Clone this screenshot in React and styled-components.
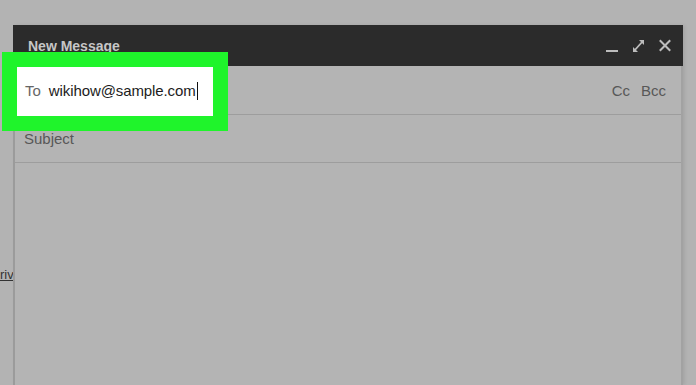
import React from "react";
import styled, { createGlobalStyle } from "styled-components";

const Global = createGlobalStyle`
  html, body { margin: 0; padding: 0; background: #b3b3b3; }
  body { font-family: "Liberation Sans", Arial, Helvetica, sans-serif; overflow: hidden; }
`;

const Page = styled.div`
  position: relative;
  display: flex;
  width: 696px;
  height: 385px;
  padding-top: 25px;
  box-sizing: border-box;
  background: #b3b3b3;
  overflow: hidden;
`;

const Side = styled.div`
  width: 13px;
  flex: none;
  padding-top: 242px;
  overflow: hidden;
`;

const SideLink = styled.span`
  display: block;
  font-size: 13px;
  color: #333;
  text-decoration: underline;
  white-space: nowrap;
`;

const Window = styled.div`
  width: 670px;
  flex: none;
  display: flex;
  flex-direction: column;
  background: #b4b4b4;
  border-left: 2px solid #9b9b9b;
  border-right: 2px solid #a2a2a2;
  box-sizing: border-box;
  box-shadow: 2px 0 3px rgba(0, 0, 0, 0.08);
`;

const Header = styled.div`
  height: 41px;
  background: #2b2b2b;
  display: flex;
  align-items: center;
  margin: 0 -2px;
  padding: 0 12px 0 15px;
`;

const Title = styled.div`
  flex: 1;
  font-size: 14px;
  font-weight: bold;
  color: #c6c6c6;
  padding-top: 1px;
`;

const Icons = styled.div`
  display: flex;
  align-items: center;
  gap: 14px;
`;

const Icon = styled.svg`
  display: block;
  width: ${(p) => p.$w}px;
  height: 14px;
`;

const Row = styled.div`
  height: ${(p) => p.$h}px;
  border-bottom: 1px solid #9d9d9d;
  display: flex;
  align-items: center;
  padding: 0 15px 0 9px;
  font-size: 15px;
  color: #585858;
`;

const Spacer = styled.div`
  flex: 1;
`;

const Links = styled.div`
  display: flex;
  gap: 11px;
  padding-top: 1px;
`;

const Highlight = styled.div`
  position: absolute;
  left: 2px;
  top: 52px;
  width: 226px;
  height: 79px;
  box-sizing: border-box;
  border: 15px solid #1ff42b;
  background: #ffffff;
  display: flex;
  align-items: center;
  padding: 0 0 2px 8px;
  font-size: 15px;
`;

const Label = styled.span`
  color: #666;
  margin-right: 8px;
`;

const Value = styled.span`
  color: #1c1c1c;
  letter-spacing: -0.1px;
`;

const Caret = styled.span`
  display: inline-block;
  width: 1px;
  height: 18px;
  background: #111;
  margin-left: 1px;
`;

export default function App() {
  return (
    <>
      <Global />
      <Page>
        <Side>
          <SideLink>riv</SideLink>
        </Side>
        <Window>
          <Header>
            <Title>New Message</Title>
            <Icons>
              <Icon $w={12} viewBox="0 0 12 14">
                <rect x="0" y="11" width="12" height="2" fill="#bcbcbc" />
              </Icon>
              <Icon $w={13} viewBox="0 0 13 14">
                <g stroke="#bcbcbc" strokeWidth="1.8" fill="none">
                  <line x1="2" y1="12" x2="11" y2="2" />
                </g>
                <polygon points="7,1 12,1 12,6" fill="#bcbcbc" />
                <polygon points="1,8 1,13 6,13" fill="#bcbcbc" />
              </Icon>
              <Icon $w={12} viewBox="0 0 12 14">
                <g stroke="#bcbcbc" strokeWidth="2" strokeLinecap="square">
                  <line x1="1.5" y1="2" x2="10.5" y2="11" />
                  <line x1="10.5" y1="2" x2="1.5" y2="11" />
                </g>
              </Icon>
            </Icons>
          </Header>
          <Row $h={48}>
            <Spacer />
            <Links>
              <span>Cc</span>
              <span>Bcc</span>
            </Links>
          </Row>
          <Row $h={47}>Subject</Row>
        </Window>
        <Highlight>
          <Label>To</Label>
          <Value>wikihow@sample.com</Value>
          <Caret />
        </Highlight>
      </Page>
    </>
  );
}
